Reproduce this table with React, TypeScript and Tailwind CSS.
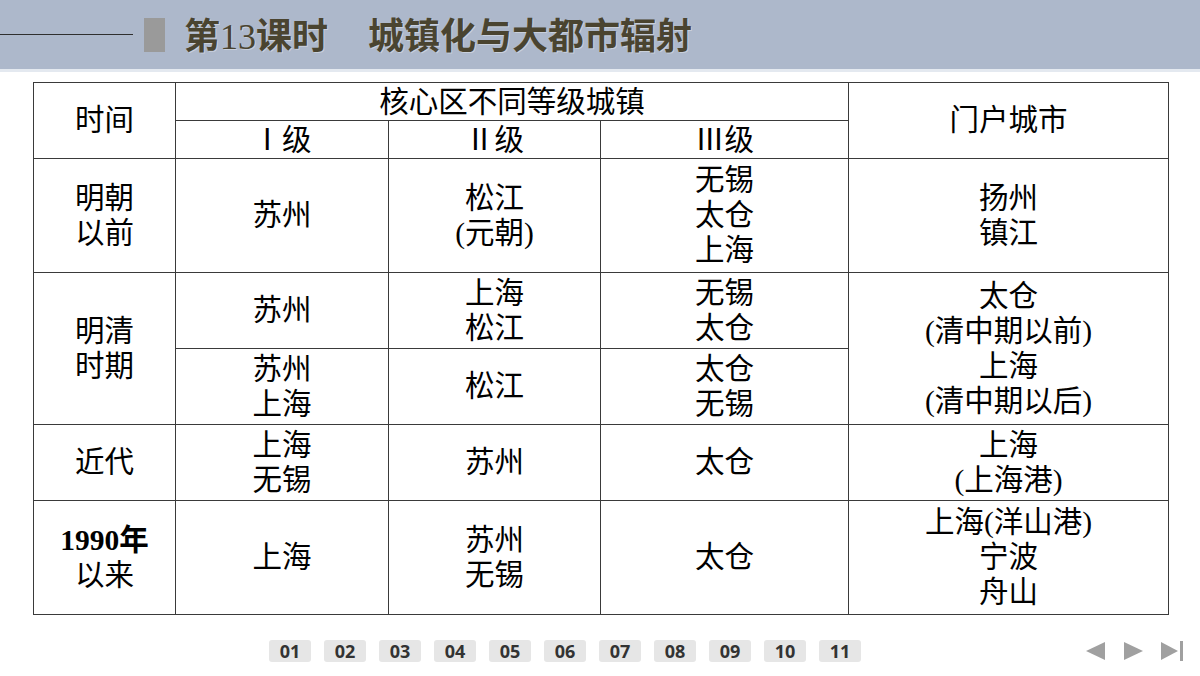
const serif = 'font-["Liberation_Serif","Noto_Sans_CJK_SC",serif]'

function Cell({
  children,
  rowSpan,
  colSpan,
  className = '',
}: {
  children: React.ReactNode
  rowSpan?: number
  colSpan?: number
  className?: string
}) {
  return (
    <td
      rowSpan={rowSpan}
      colSpan={colSpan}
      className={`border border-[#3a3a3a] p-0 text-center align-middle ${className}`}
    >
      {children}
    </td>
  )
}

function Lines({ items, bold }: { items: string[]; bold?: boolean }) {
  return (
    <div className={bold ? 'font-bold' : ''}>
      {items.map((t) => (
        <div key={t}>{t}</div>
      ))}
    </div>
  )
}

const pages = ['01', '02', '03', '04', '05', '06', '07', '08', '09', '10', '11']

export default function App() {
  return (
    <div className="h-[676px] w-[1200px] overflow-hidden bg-white">
      <header className="flex h-[69px] items-center bg-[#adb8cb]">
        <div className="h-px w-[133px] bg-[#2f2f2f]" />
        <div className="ml-[11px] h-[34px] w-[21px] bg-[#9a9a9a]" />
        <h1 className="ml-[19px] font-['Noto_Sans_CJK_SC',sans-serif] text-[36px] font-bold leading-none text-[#4a4430] [text-shadow:1px_1px_0_rgba(255,255,255,0.35)]">
          第<span className="font-['Liberation_Serif',serif] font-normal">13</span>课时
          <span className="ml-[40px]">城镇化与大都市辐射</span>
        </h1>
      </header>
      <div className="h-[3px] bg-[#e4e9f0]" />

      <div className="ml-[33px] mt-[10px]">
        <table
          className={`w-[1135px] table-fixed border-collapse text-[29.5px] leading-[35px] text-black ${serif}`}
        >
          <colgroup>
            <col className="w-[142px]" />
            <col className="w-[213px]" />
            <col className="w-[212px]" />
            <col className="w-[248px]" />
            <col className="w-[320px]" />
          </colgroup>
          <tbody>
            <tr className="h-[38px]">
              <Cell rowSpan={2}>时间</Cell>
              <Cell colSpan={3} className="leading-[30px]">核心区不同等级城镇</Cell>
              <Cell rowSpan={2}>门户城市</Cell>
            </tr>
            <tr className="h-[38px]">
              <Cell className="leading-[30px]">Ⅰ级</Cell>
              <Cell className="leading-[30px]">Ⅱ级</Cell>
              <Cell className="leading-[30px]">Ⅲ级</Cell>
            </tr>
            <tr className="h-[114px]">
              <Cell><Lines items={['明朝', '以前']} /></Cell>
              <Cell>苏州</Cell>
              <Cell><Lines items={['松江', '(元朝)']} /></Cell>
              <Cell><Lines items={['无锡', '太仓', '上海']} /></Cell>
              <Cell><Lines items={['扬州', '镇江']} /></Cell>
            </tr>
            <tr className="h-[76px]">
              <Cell rowSpan={2}><Lines items={['明清', '时期']} /></Cell>
              <Cell>苏州</Cell>
              <Cell><Lines items={['上海', '松江']} /></Cell>
              <Cell><Lines items={['无锡', '太仓']} /></Cell>
              <Cell rowSpan={2}>
                <Lines items={['太仓', '(清中期以前)', '上海', '(清中期以后)']} />
              </Cell>
            </tr>
            <tr className="h-[76px]">
              <Cell><Lines items={['苏州', '上海']} /></Cell>
              <Cell>松江</Cell>
              <Cell><Lines items={['太仓', '无锡']} /></Cell>
            </tr>
            <tr className="h-[76px]">
              <Cell>近代</Cell>
              <Cell><Lines items={['上海', '无锡']} /></Cell>
              <Cell>苏州</Cell>
              <Cell>太仓</Cell>
              <Cell><Lines items={['上海', '(上海港)']} /></Cell>
            </tr>
            <tr className="h-[114px]">
              <Cell>
                <div className="font-bold">1990年</div>
                <div>以来</div>
              </Cell>
              <Cell>上海</Cell>
              <Cell><Lines items={['苏州', '无锡']} /></Cell>
              <Cell>太仓</Cell>
              <Cell><Lines items={['上海(洋山港)', '宁波', '舟山']} /></Cell>
            </tr>
          </tbody>
        </table>
      </div>

      <nav className="mt-[25px] flex items-center">
        <div className="ml-[269px] flex gap-[13px]">
          {pages.map((p) => (
            <span
              key={p}
              className="flex h-[22px] w-[42px] items-center justify-center rounded-[3px] bg-[#e6e6e6] font-['Open_Sans',sans-serif] text-[18px] font-bold text-[#333]"
            >
              {p}
            </span>
          ))}
        </div>
        <div className="ml-auto mr-[16px] flex items-center gap-[17px]">
          <svg width="20" height="18" viewBox="0 0 20 18">
            <polygon points="19,0 19,18 0,9" fill="#a0a0a0" />
          </svg>
          <svg width="20" height="18" viewBox="0 0 20 18">
            <polygon points="1,0 1,18 20,9" fill="#a0a0a0" />
          </svg>
          <svg width="24" height="20" viewBox="0 0 24 20">
            <polygon points="1,1 1,19 18,10" fill="#a0a0a0" />
            <rect x="20" y="0" width="3" height="20" fill="#a0a0a0" />
          </svg>
        </div>
      </nav>
    </div>
  )
}
